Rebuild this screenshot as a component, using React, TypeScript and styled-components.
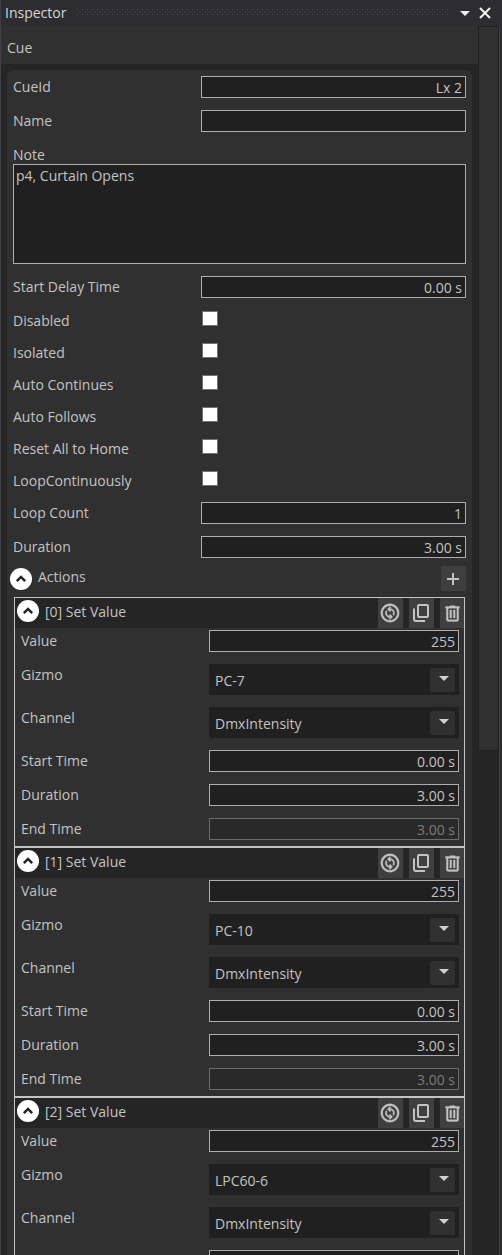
import React, { useId, useState } from "react";
import styled, { createGlobalStyle } from "styled-components";
import { MdOutlineChangeCircle } from "react-icons/md";

const color = {
  chrome: "#2d2d30",
  edge: "#3f3f46",
  panel: "#303030",
  body: "#252525",
  field: "#202020",
  line: "#abadb3",
  dimLine: "#6b6b6d",
  text: "#c3c3c3",
  dimText: "#7c7c7c",
  button: "#3f3f3f",
};

const GlobalStyle = createGlobalStyle`
  *, *::before, *::after { box-sizing: border-box; }
  body {
    margin: 0;
    background: ${color.chrome};
    color: ${color.text};
    font: 14px/20px "Open Sans", "Noto Sans", sans-serif;
  }
  button, input, select, textarea { font: inherit; color: inherit; margin: 0; }
`;

const Window = styled.main`
  display: flex;
  flex-direction: column;
  height: 100vh;
  border-left: 1px solid ${color.edge};
  background: ${color.chrome};
`;

const TitleBar = styled.header`
  display: flex;
  align-items: center;
  height: 26px;
  padding: 0 11px 0 4px;
  flex: none;
`;

const Title = styled.h1`
  margin: 0;
  font-size: 14px;
  font-weight: 400;
  color: #d6d6d6;
`;

const Grip = styled.svg`
  flex: 1;
  min-width: 0;
  height: 6px;
  margin: 0 9px 2px 11px;
`;

const TitleButton = styled.button`
  display: flex;
  align-items: center;
  justify-content: center;
  width: 12px;
  height: 20px;
  padding: 0;
  border: 0;
  background: none;
  color: #f1f1f1;

  & + & { margin-left: 8px; }
`;

const Main = styled.div`
  display: flex;
  flex: 1;
  min-height: 0;
  margin-right: 2px;
  border-right: 1px solid ${color.edge};
  background: ${color.body};
`;

const Scroller = styled.div`
  flex: 1;
  min-width: 0;
  overflow-y: auto;
  scrollbar-width: none;
`;

const Track = styled.div`
  width: 21px;
  flex: none;
`;

const Thumb = styled.div`
  height: 59%;
  border: 1px solid #202020;
  background: ${color.panel};
`;

const Heading = styled.h2`
  margin: 0;
  height: 38px;
  padding: 12px 6px 6px;
  background: ${color.panel};
  font-size: 14px;
  font-weight: 400;
`;

const Panel = styled.section`
  margin: 6px;
  padding: 6px 6px 12px;
  border-radius: 6px;
  background: ${color.panel};
`;

const Fields = styled.div`
  display: flex;
  flex-direction: column;
  gap: 12px;
`;

const FieldRow = styled.div`
  display: grid;
  grid-template-columns: 188px minmax(0, 1fr);
  align-items: start;
`;

const Label = styled.label`
  display: block;
  height: 20px;
  line-height: 22px;
`;

const TextInput = styled.input`
  display: block;
  width: 100%;
  height: 22px;
  padding: 1px 3px 0;
  border: 1px solid ${color.line};
  border-radius: 0;
  background: ${color.field};
  text-align: right;

  &:disabled {
    border-color: ${color.dimLine};
    background: #292929;
    color: ${color.dimText};
  }
`;

const NoteBox = styled.textarea`
  display: block;
  width: 100%;
  height: 100px;
  padding: 1px 2px;
  border: 1px solid ${color.line};
  border-radius: 0;
  background: ${color.field};
  resize: none;
`;

const CheckBox = styled.input`
  appearance: none;
  width: 16px;
  height: 15px;
  margin: 1px 0 0 1px;
  border: 1px solid #707070;
  background: #fff;

  &:checked { box-shadow: inset 0 0 0 3px #fff; background: #212121; }
`;

const SelectFrame = styled.div`
  display: grid;
  grid-template-columns: minmax(0, 1fr) 25px 4px;
  align-items: center;
  height: 31px;
  background: ${color.field};
`;

const SelectBox = styled.select`
  grid-area: 1 / 1 / 2 / 4;
  appearance: none;
  width: 100%;
  height: 31px;
  padding: 2px 30px 0 6px;
  border: 0;
  background: transparent;

  option { background: ${color.field}; }
`;

const SelectArrow = styled.span`
  grid-area: 1 / 2;
  display: flex;
  align-items: center;
  justify-content: center;
  height: 24px;
  padding: 0 0 2px 3px;
  border-radius: 2px;
  background: ${color.panel};
  color: #d0d0d0;
  pointer-events: none;
`;

const ActionsHeader = styled.div`
  display: flex;
  align-items: center;
  height: 25px;
  margin: 8px 0 6px -3px;
`;

const GroupTitle = styled.h3`
  flex: 1;
  margin: 0 0 0 6px;
  padding-bottom: 3px;
  font-size: 14px;
  font-weight: 400;
`;

const RoundButton = styled.button`
  display: flex;
  align-items: center;
  justify-content: center;
  width: 22px;
  height: 22px;
  padding: 0;
  border: 0;
  border-radius: 50%;
  background: #fff;
  color: #222;
`;

const IconButton = styled.button<{ $tall?: boolean }>`
  display: flex;
  align-items: center;
  justify-content: center;
  width: 25px;
  height: ${(p) => (p.$tall ? 30 : 25)}px;
  padding: 0 1px 0 0;
  border: 0;
  background: ${color.button};
  color: ${color.text};
`;

const Cards = styled.div`
  margin: 0 1px;
`;

const Card = styled.article`
  border: 1px solid #c3c3c3;
`;

const CardHeader = styled.header`
  display: flex;
  height: 30px;
  padding: 2px 0 0 2px;
  background: ${color.body};

  ${GroupTitle} { line-height: 24px; }
`;

const Tools = styled.div`
  display: flex;
  gap: 6px;
  margin-top: -2px;

  ${IconButton}:last-child { width: 24px; padding: 0; }
`;

const ChangeIcon = styled(MdOutlineChangeCircle)`
  width: 22px;
  height: 22px;

  path:not([fill="none"]) { stroke: currentColor; stroke-width: 0.4px; }
`;

const CardBody = styled(Fields)`
  padding: 2px 5px 6px 6px;
`;

const ArrowDown = () => (
  <svg width="10" height="5" viewBox="0 0 10 5" aria-hidden="true">
    <path d="M0 0h10L5 5z" fill="currentColor" />
  </svg>
);

const CloseIcon = () => (
  <svg width="12" height="12" viewBox="0 0 12 12" aria-hidden="true">
    <path d="M1 1l10 10M11 1L1 11" stroke="currentColor" strokeWidth="2" />
  </svg>
);

const ChevronUp = () => (
  <svg width="20" height="20" viewBox="0 0 24 24" aria-hidden="true">
    <path d="M7 14.5L12 9.5L17 14.5" fill="none" stroke="currentColor" strokeWidth="3" />
  </svg>
);

const PlusIcon = () => (
  <svg width="12" height="12" viewBox="0 0 12 12" aria-hidden="true">
    <path d="M6 0v12M0 6h12" stroke="currentColor" strokeWidth="2" />
  </svg>
);

const DuplicateIcon = () => (
  <svg width="16" height="18" viewBox="0 0 16 18" fill="none" stroke="currentColor" strokeWidth="2" aria-hidden="true">
    <rect x="5" y="1" width="10" height="12" rx="1" />
    <path d="M1 4.5v10.5a2 2 0 0 0 2 2h9" />
  </svg>
);

const TrashIcon = () => (
  <svg width="21" height="21" viewBox="0 0 24 24" fill="currentColor" aria-hidden="true">
    <path
      d="M9 3v1H4v2h1v13a2 2 0 0 0 2 2h10a2 2 0 0 0 2-2V6h1V4h-5V3H9M7 6h10v13H7V6m2 2v9h2V8H9m4 0v9h2V8h-2z"
      stroke="currentColor"
      strokeWidth="0.4"
    />
  </svg>
);

function TextField({ label, value, disabled }: { label: string; value: string; disabled?: boolean }) {
  const id = useId();
  return (
    <FieldRow>
      <Label htmlFor={id}>{label}</Label>
      <TextInput id={id} type="text" defaultValue={value} disabled={disabled} />
    </FieldRow>
  );
}

function CheckField({ label }: { label: string }) {
  const id = useId();
  return (
    <FieldRow>
      <Label htmlFor={id}>{label}</Label>
      <CheckBox id={id} type="checkbox" />
    </FieldRow>
  );
}

function SelectField({ label, value, options }: { label: string; value: string; options: string[] }) {
  const id = useId();
  return (
    <FieldRow>
      <Label htmlFor={id}>{label}</Label>
      <SelectFrame>
        <SelectArrow>
          <ArrowDown />
        </SelectArrow>
        <SelectBox id={id} defaultValue={value}>
          {options.map((o) => (
            <option key={o}>{o}</option>
          ))}
        </SelectBox>
      </SelectFrame>
    </FieldRow>
  );
}

const gizmos = ["PC-7", "PC-10", "LPC60-6"];

function ActionCard({ index, gizmo }: { index: number; gizmo: string }) {
  const [open, setOpen] = useState(true);
  return (
    <Card>
      <CardHeader>
        <RoundButton aria-label="Toggle action" aria-expanded={open} onClick={() => setOpen(!open)}>
          <ChevronUp />
        </RoundButton>
        <GroupTitle>[{index}] Set Value</GroupTitle>
        <Tools>
          <IconButton $tall aria-label="Change action">
            <ChangeIcon />
          </IconButton>
          <IconButton $tall aria-label="Duplicate action">
            <DuplicateIcon />
          </IconButton>
          <IconButton $tall aria-label="Delete action">
            <TrashIcon />
          </IconButton>
        </Tools>
      </CardHeader>
      {open && (
        <CardBody>
          <TextField label="Value" value="255" />
          <SelectField label="Gizmo" value={gizmo} options={gizmos} />
          <SelectField label="Channel" value="DmxIntensity" options={["DmxIntensity"]} />
          <TextField label="Start Time" value="0.00 s" />
          <TextField label="Duration" value="3.00 s" />
          <TextField label="End Time" value="3.00 s" disabled />
        </CardBody>
      )}
    </Card>
  );
}

const flags = ["Disabled", "Isolated", "Auto Continues", "Auto Follows", "Reset All to Home", "LoopContinuously"];

export default function App() {
  const [open, setOpen] = useState(true);
  return (
    <>
      <GlobalStyle />
      <Window>
        <TitleBar>
          <Title>Inspector</Title>
          <Grip aria-hidden="true">
            <defs>
              <pattern id="grip" width="5" height="5" patternUnits="userSpaceOnUse">
                <path d="M0 0h1v1h-1z" fill="#505054" />
                <path d="M2 2h2v2h-2z" fill="#3a3a3d" />
              </pattern>
            </defs>
            <rect width="100%" height="100%" fill="url(#grip)" />
          </Grip>
          <TitleButton aria-label="Window menu">
            <ArrowDown />
          </TitleButton>
          <TitleButton aria-label="Close">
            <CloseIcon />
          </TitleButton>
        </TitleBar>
        <Main>
          <Scroller>
            <Heading>Cue</Heading>
            <Panel>
              <Fields>
                <TextField label="CueId" value="Lx 2" />
                <TextField label="Name" value="" />
                <div>
                  <Label htmlFor="note">Note</Label>
                  <NoteBox id="note" defaultValue="p4, Curtain Opens" />
                </div>
                <TextField label="Start Delay Time" value="0.00 s" />
                {flags.map((f) => (
                  <CheckField key={f} label={f} />
                ))}
                <TextField label="Loop Count" value="1" />
                <TextField label="Duration" value="3.00 s" />
              </Fields>
              <ActionsHeader>
                <RoundButton aria-label="Toggle actions" aria-expanded={open} onClick={() => setOpen(!open)}>
                  <ChevronUp />
                </RoundButton>
                <GroupTitle>Actions</GroupTitle>
                <IconButton aria-label="Add action">
                  <PlusIcon />
                </IconButton>
              </ActionsHeader>
              {open && (
                <Cards>
                  {gizmos.map((g, i) => (
                    <ActionCard key={g} index={i} gizmo={g} />
                  ))}
                </Cards>
              )}
            </Panel>
          </Scroller>
          <Track>
            <Thumb />
          </Track>
        </Main>
      </Window>
    </>
  );
}
